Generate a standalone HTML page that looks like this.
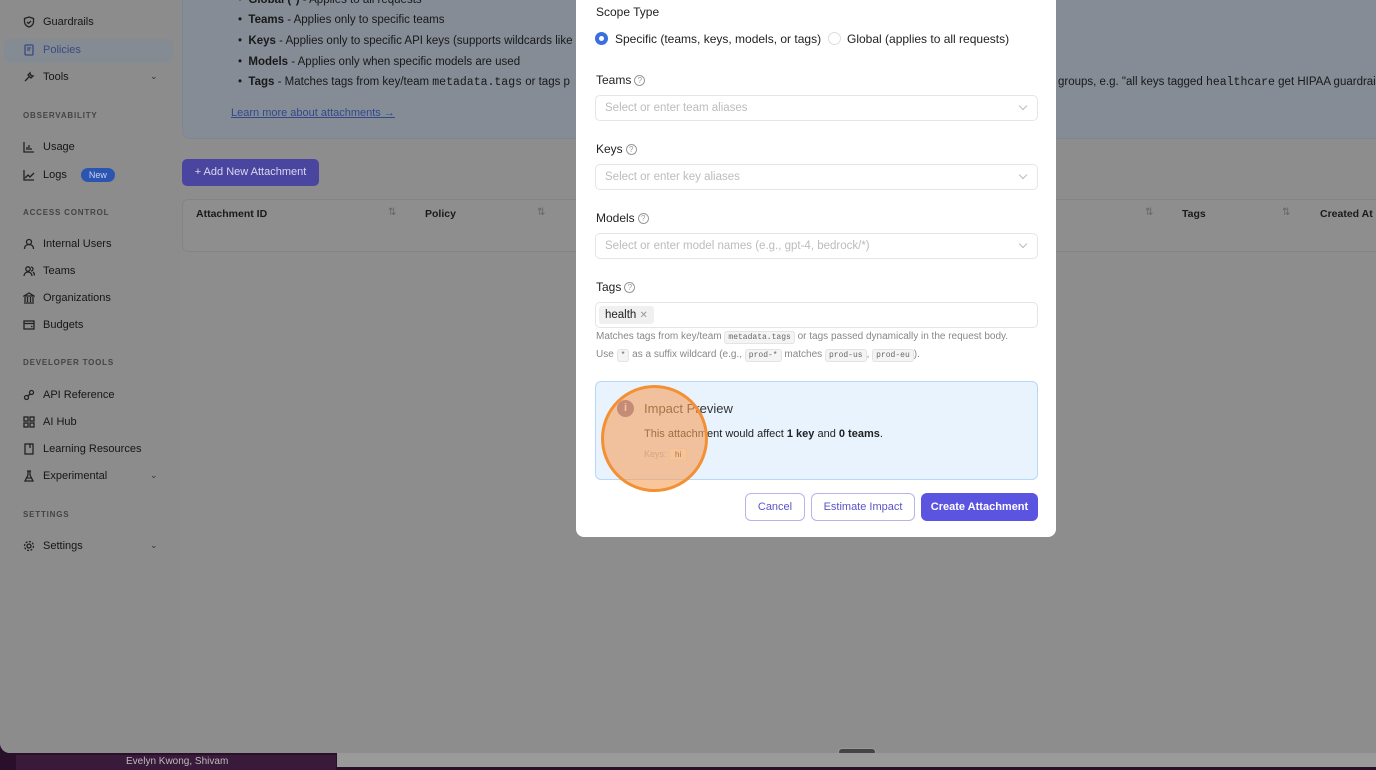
<!DOCTYPE html>
<html><head><meta charset="utf-8"><style>
*{box-sizing:border-box;margin:0;padding:0}
body{width:1376px;height:770px;overflow:hidden;background:#2a0f2a;font-family:"Liberation Sans",sans-serif;position:relative}
.screen{position:absolute;left:0;top:0;width:1376px;height:753px;background:#8d8d8d;border-radius:0 0 0 10px;overflow:hidden}
.side{position:absolute;left:0;top:0;width:180px;height:753px;background:#8c8c8c}
.it{position:absolute;left:23px;font-size:11px;color:#161616;display:flex;align-items:center}
.it svg{width:12px;height:12px;margin-right:8px;stroke:#222;fill:none;stroke-width:1.3}
.sec{position:absolute;left:23px;font-size:8px;font-weight:bold;letter-spacing:.8px;color:#444}
.chev{position:absolute;left:150px;font-size:9px;color:#333}
.info{position:absolute;left:182px;top:-10px;width:1200px;height:149px;background:#858c96;border:1px solid #7b8794;border-radius:8px}
.li{position:absolute;font-size:11.5px;color:#181818;white-space:nowrap}
.btn{position:absolute;left:182px;top:159px;width:137px;height:27px;background:#4a459f;border-radius:5px;color:#d8d8ee;font-size:11px;line-height:27px;text-align:center}
.tbl{position:absolute;left:182px;top:199px;width:1200px;height:53px;border:1px solid #848484;border-radius:6px;background:#8e8e8e}
.th{position:absolute;top:8px;font-size:10.5px;font-weight:bold;color:#1a1a1a}
.ar{position:absolute;top:7px;font-size:10px;color:#666}
.modal{position:absolute;left:576px;top:0;width:480px;height:537px;background:#fff;border-radius:0 0 8px 8px}
.lab{position:absolute;left:20px;font-size:12px;color:#222}
.q{display:inline-block;width:11px;height:11px;border:1px solid #999;border-radius:50%;font-size:8px;color:#999;text-align:center;line-height:9px;margin-left:3px;vertical-align:1px}
.sel{position:absolute;left:19px;width:443px;height:26px;border:1px solid #e5e5e5;border-radius:5px;font-size:11.5px;color:#bcbcbc;padding:6px 9px}
.sel.arr:after{content:"";position:absolute;right:11px;top:7px;width:5px;height:5px;border-right:1px solid #bbb;border-bottom:1px solid #bbb;transform:rotate(45deg)}
.hint{position:absolute;left:20px;font-size:10px;color:#888;white-space:nowrap}
code{font-family:"Liberation Mono",monospace;font-size:8px;background:#f4f4f4;border:1px solid #e4e4e4;border-radius:3px;padding:1px 3px;color:#666}
.imp{position:absolute;left:19px;top:381px;width:443px;height:99px;background:#e8f3fe;border:1px solid #b8d8f7;border-radius:6px}
.b2{position:absolute;top:493px;height:28px;border-radius:6px;font-size:11px;line-height:26px;text-align:center}
</style></head><body>
<div class="screen">
<div class="side">
<div class="it" style="top:16px"><svg viewBox="0 0 12 12"><path d="M6 1L10.5 2.5V6C10.5 8.5 8 10.5 6 11C4 10.5 1.5 8.5 1.5 6V2.5Z"/><path d="M4 6l1.5 1.5L8 5"/></svg>Guardrails</div>
<div style="position:absolute;left:4px;top:39px;width:169px;height:24px;background:#858b92;border-radius:5px"></div>
<div class="it" style="top:44px;color:#3a4a82"><svg viewBox="0 0 12 12" style="stroke:#3a4a82"><rect x="2" y="1" width="8" height="10" rx="1"/><path d="M4 4h4M4 6h3"/></svg>Policies</div>
<div class="it" style="top:71px"><svg viewBox="0 0 12 12"><path d="M2 10l4.5-4.5M7 2a3 3 0 0 0 3 3l-2 2-3-3z"/></svg>Tools</div><div class="chev" style="top:71px">⌄</div>
<div class="sec" style="top:111px">OBSERVABILITY</div>
<div class="it" style="top:141px"><svg viewBox="0 0 12 12"><path d="M1 1v10h10M4 9V6M6 9V4M8 9V7"/></svg>Usage</div>
<div class="it" style="top:168px"><svg viewBox="0 0 12 12"><path d="M1 1v10h10M2 9l3-3 2 2 4-4"/></svg>Logs<span style="margin-left:14px;background:#2b55b0;color:#c8d4ee;font-size:9px;padding:2px 8px;border-radius:8px">New</span></div>
<div class="sec" style="top:208px">ACCESS CONTROL</div>
<div class="it" style="top:238px"><svg viewBox="0 0 12 12"><circle cx="6" cy="4" r="2.5"/><path d="M1.5 11c0-3 2-4.5 4.5-4.5s4.5 1.5 4.5 4.5"/></svg>Internal Users</div>
<div class="it" style="top:265px"><svg viewBox="0 0 12 12"><circle cx="5" cy="4" r="2.2"/><path d="M1 11c0-2.5 2-4 4-4s4 1.5 4 4M8 2a2 2 0 0 1 0 4M10 7c1 .7 1.5 2 1.5 3.5"/></svg>Teams</div>
<div class="it" style="top:292px"><svg viewBox="0 0 12 12"><path d="M1 4L6 1l5 3zM2 5v5M4.5 5v5M7.5 5v5M10 5v5M1 11h10"/></svg>Organizations</div>
<div class="it" style="top:319px"><svg viewBox="0 0 12 12"><rect x="1" y="2" width="10" height="8"/><path d="M1 4.5h10M8 7.5h1.5"/></svg>Budgets</div>
<div class="sec" style="top:358px">DEVELOPER TOOLS</div>
<div class="it" style="top:389px"><svg viewBox="0 0 12 12"><circle cx="8.5" cy="3.5" r="2"/><circle cx="3.5" cy="8.5" r="2"/><path d="M5 7l2-2"/></svg>API Reference</div>
<div class="it" style="top:416px"><svg viewBox="0 0 12 12"><rect x="1" y="1" width="4" height="4"/><rect x="7" y="1" width="4" height="4"/><rect x="1" y="7" width="4" height="4"/><rect x="7" y="7" width="4" height="4"/></svg>AI Hub</div>
<div class="it" style="top:443px"><svg viewBox="0 0 12 12"><rect x="2" y="1" width="8" height="10"/><path d="M7 1v4"/></svg>Learning Resources</div>
<div class="it" style="top:470px"><svg viewBox="0 0 12 12"><path d="M4 1h4M5 1v4L2 11h8L7 5V1M3 8h6"/></svg>Experimental</div><div class="chev" style="top:470px">⌄</div>
<div class="sec" style="top:510px">SETTINGS</div>
<div class="it" style="top:540px"><svg viewBox="0 0 12 12"><circle cx="6" cy="6" r="2"/><circle cx="6" cy="6" r="4.5" stroke-dasharray="2 1.5"/></svg>Settings</div><div class="chev" style="top:540px">⌄</div>
</div>
<div class="info"></div>
<div class="li" style="left:238px;top:-6px">• &nbsp;<b>Global (*)</b> - Applies to all requests</div>
<div class="li" style="left:238px;top:14px">• &nbsp;<b>Teams</b> - Applies only to specific teams</div>
<div class="li" style="left:238px;top:35px">• &nbsp;<b>Keys</b> - Applies only to specific API keys (supports wildcards like</div>
<div class="li" style="left:238px;top:56px">• &nbsp;<b>Models</b> - Applies only when specific models are used</div>
<div class="li" style="left:238px;top:76px">• &nbsp;<b>Tags</b> - Matches tags from key/team <span style="font-family:'Liberation Mono',monospace">metadata.tags</span> or tags p</div>
<div class="li" style="left:1058px;top:76px">groups, e.g. "all keys tagged <span style="font-family:'Liberation Mono',monospace">healthcare</span> get HIPAA guardrai</div>
<div class="li" style="left:231px;top:107px;color:#2f4a8a;text-decoration:underline;font-size:11px">Learn more about attachments →</div>
<div class="btn">+ Add New Attachment</div>
<div class="tbl">
<div class="th" style="left:13px">Attachment ID</div><div class="ar" style="left:205px">⇅</div>
<div class="th" style="left:242px">Policy</div><div class="ar" style="left:354px">⇅</div>
<div class="ar" style="left:962px">⇅</div><div class="th" style="left:999px">Tags</div><div class="ar" style="left:1099px">⇅</div><div class="th" style="left:1137px">Created At</div>
</div>
<div class="modal">
<div class="lab" style="top:5px">Scope Type</div>
<div style="position:absolute;left:19px;top:32px;width:13px;height:13px;border-radius:50%;background:#3b6fe0"><div style="width:5px;height:5px;background:#fff;border-radius:50%;margin:4px"></div></div>
<div class="lab" style="left:39px;top:32px">Specific (teams, keys, models, or tags)</div>
<div style="position:absolute;left:252px;top:32px;width:13px;height:13px;border-radius:50%;border:1px solid #ddd"></div>
<div class="lab" style="left:271px;top:32px">Global (applies to all requests)</div>
<div class="lab" style="top:73px">Teams<span class="q">?</span></div>
<div class="sel arr" style="top:95px">Select or enter team aliases</div>
<div class="lab" style="top:142px">Keys<span class="q">?</span></div>
<div class="sel arr" style="top:164px">Select or enter key aliases</div>
<div class="lab" style="top:211px">Models<span class="q">?</span></div>
<div class="sel arr" style="top:233px">Select or enter model names (e.g., gpt-4, bedrock/*)</div>
<div class="lab" style="top:280px">Tags<span class="q">?</span></div>
<div class="sel" style="top:302px;padding:3px"><span style="display:inline-block;background:#f0f0f0;border-radius:3px;padding:3px 6px;color:#222;font-size:11.5px">health <span style="color:#999;font-size:10px">✕</span></span></div>
<div class="hint" style="top:331px">Matches tags from key/team <code>metadata.tags</code> or tags passed dynamically in the request body.</div>
<div class="hint" style="top:349px">Use <code>*</code> as a suffix wildcard (e.g., <code>prod-*</code> matches <code>prod-us</code>, <code>prod-eu</code>).</div>
<div class="imp">
<div style="position:absolute;left:21px;top:18px;width:17px;height:17px;border-radius:50%;background:#7b6fa6;color:#fff;font-size:11px;text-align:center;line-height:17px;font-weight:bold">i</div>
<div style="position:absolute;left:48px;top:19px;font-size:13px;color:#333">Impact Preview</div>
<div style="position:absolute;left:48px;top:46px;font-size:11px;color:#222">This attachment would affect <b>1 key</b> and <b>0 teams</b>.</div>
<div style="position:absolute;left:48px;top:67px;font-size:9px;color:#aaa">Keys: <span style="background:#fafafa;border:1px solid #eee;padding:1px 5px;color:#333;font-size:8px">hi</span></div>
</div>
<div style="position:absolute;left:25px;top:385px;width:107px;height:107px;border-radius:50%;background:rgba(245,160,90,.6);border:3px solid #f39033"></div>
<div class="b2" style="left:169px;width:60px;border:1px solid #b8b3e8;color:#5a54c8">Cancel</div>
<div class="b2" style="left:235px;width:104px;border:1px solid #b8b3e8;color:#5a54c8">Estimate Impact</div>
<div class="b2" style="left:345px;width:117px;background:#5b54e0;color:#fff;font-weight:bold;line-height:28px">Create Attachment</div>
</div>
</div>
<div style="position:absolute;left:838px;top:748px;width:38px;height:8px;border-radius:4px;background:#444;border:1px solid #999"></div>
<div style="position:absolute;left:16px;top:755px;width:320px;height:15px;background:#3a1a3a"></div>
<div style="position:absolute;left:126px;top:756px;font-size:10px;color:#bbb">Evelyn Kwong, Shivam</div>
<div style="position:absolute;left:337px;top:753px;width:1039px;height:14px;background:#9a9a9a"></div>
</body></html>
